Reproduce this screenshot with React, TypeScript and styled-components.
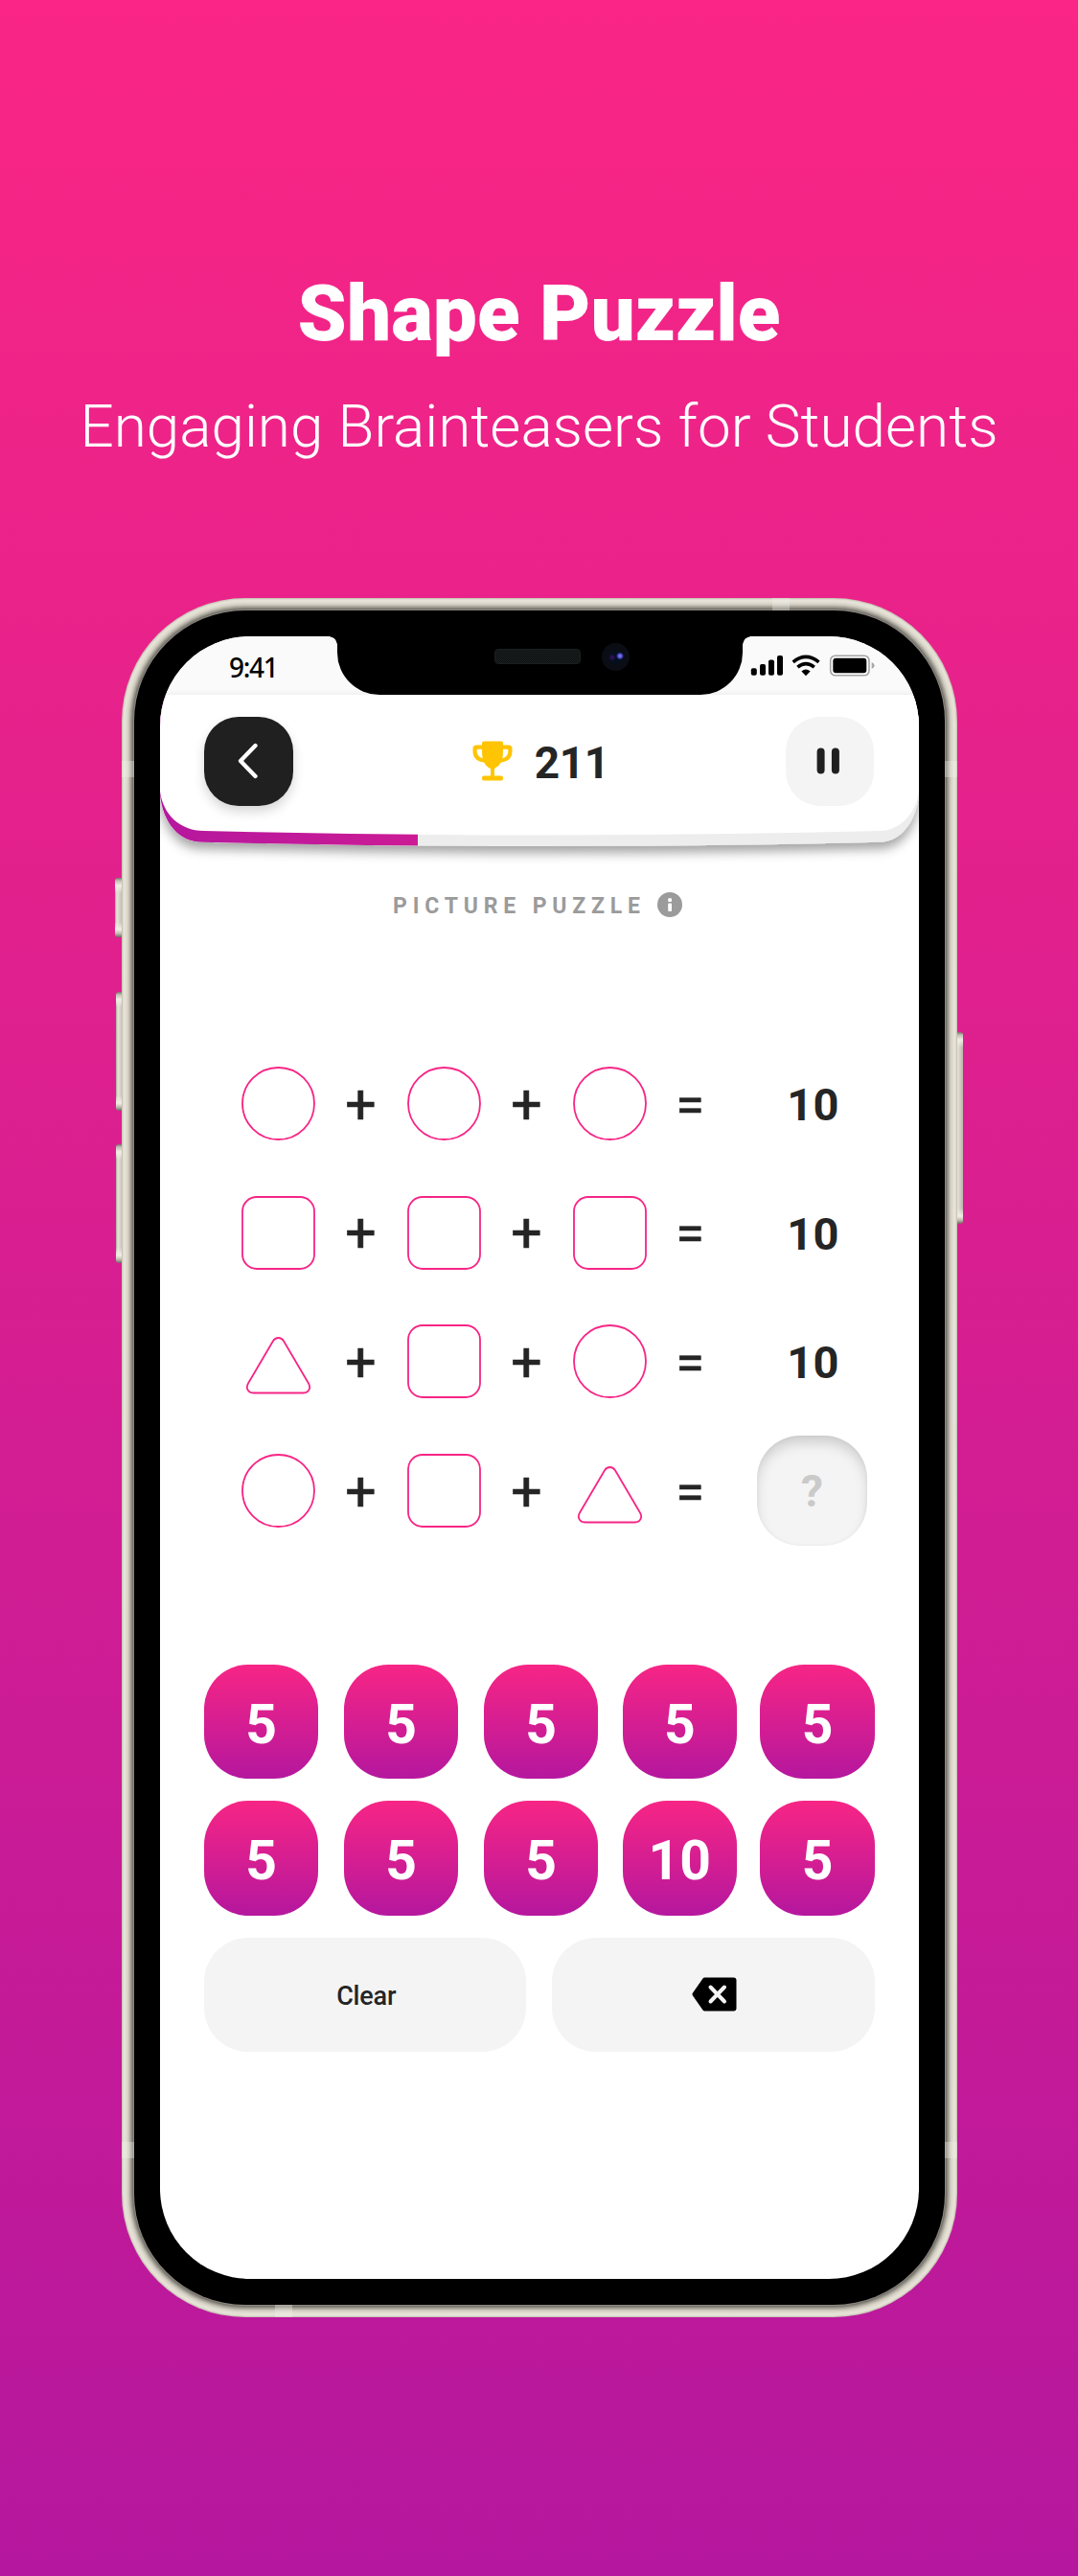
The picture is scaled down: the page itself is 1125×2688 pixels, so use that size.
import React from "react";
import styled, { createGlobalStyle } from "styled-components";

const PINK = "#f72585";
const PURPLE = "#b5179e";
const INK = "#252525";
const SOFT = "#f4f4f4";

const GlobalStyle = createGlobalStyle`
  * { box-sizing: border-box; }
  body { margin: 0; font-family: Roboto, "Liberation Sans", sans-serif; }
  button { font-family: inherit; border: 0; padding: 0; cursor: pointer; }
`;

const Page = styled.main`
  width: 1125px;
  height: 2688px;
  overflow: hidden;
  display: flex;
  flex-direction: column;
  background: linear-gradient(180deg, #fa2586 0%, ${PINK} 4%, ${PURPLE} 100%);
`;

const Headline = styled.header`
  height: 624px;
  padding-top: 278px;
  display: flex;
  flex-direction: column;
  align-items: center;
  color: #fff;
`;

const Title = styled.h1`
  margin: 0;
  font-size: 82px;
  line-height: 98px;
  font-weight: 900;
  white-space: nowrap;
`;

const Subtitle = styled.p`
  margin: 32px 0 0;
  font-size: 62px;
  line-height: 74px;
  font-weight: 300;
  white-space: nowrap;
`;

const Phone = styled.div`
  position: relative;
  width: 872px;
  height: 1794px;
  margin-left: 127px;
  padding: 13px;
`;

const SideButton = styled.span<{ $side: "left" | "right"; $top: number; $height: number; $width: number }>`
  position: absolute;
  ${(p) => p.$side}: ${(p) => -p.$width}px;
  top: ${(p) => p.$top}px;
  width: ${(p) => p.$width + 2}px;
  height: ${(p) => p.$height}px;
  border-radius: ${(p) => (p.$side === "left" ? "3px 0 0 3px" : "0 3px 3px 0")};
  background:
    linear-gradient(180deg, #77746b 0, #c2beb2 3px, #f1eee5 8px, transparent 16px, transparent calc(100% - 16px), #f1eee5 calc(100% - 8px), #c2beb2 calc(100% - 4px), #6d6a62 100%),
    linear-gradient(90deg, #aaa79d 0, #e8e5db 2px, #d2cec3 5px, #b8b4a9 100%);
`;

const Body = styled.div`
  position: relative;
  width: 846px;
  height: 1768px;
  padding: 27px;
  border-radius: 116px;
  background: #000;
  box-shadow:
    0 0 0 1px #8b8881,
    0 0 0 2px #75726b,
    0 0 0 3px #8b887f,
    0 0 0 4px #a09c92,
    0 0 0 5px #b3afa4,
    0 0 0 6px #c6c2b7,
    0 0 0 7px #d3cfc3,
    0 0 0 8px #dcd8cc,
    0 0 0 9px #e0dcd0,
    0 0 0 11px #e6e2d7,
    0 0 0 12px #dfdbcf,
    0 0 0 13px #c9c4b6;
`;

const Band = styled.span<{ $x: number; $y: number; $vertical?: boolean }>`
  position: absolute;
  left: ${(p) => p.$x}px;
  top: ${(p) => p.$y}px;
  width: ${(p) => (p.$vertical ? 18 : 13)}px;
  height: ${(p) => (p.$vertical ? 13 : 17)}px;
  background: rgba(240, 240, 235, 0.35);
`;

const Screen = styled.div`
  width: 792px;
  height: 1714px;
  border-radius: 94px;
  overflow: hidden;
  background: #fff;
  display: flex;
  flex-direction: column;
`;

const StatusBar = styled.div`
  height: 61px;
  display: grid;
  grid-template-columns: 185px 423px 184px;
  background: #fafafa;
`;

const Clock = styled.span`
  padding: 13px 0 0 72px;
  font-family: "Noto Sans", sans-serif;
  font-size: 28px;
  line-height: 38px;
  font-weight: 500;
  letter-spacing: -1.3px;
  color: #000;
`;

const Notch = styled.div`
  position: relative;
  display: flex;
  align-items: flex-start;
  background: #000;
  border-radius: 0 0 44px 44px;
  &::before,
  &::after {
    content: "";
    position: absolute;
    top: 0;
    width: 9px;
    height: 9px;
  }
  &::before {
    left: -9px;
    background: radial-gradient(circle at 0 100%, transparent 8.5px, #000 9px);
  }
  &::after {
    right: -9px;
    background: radial-gradient(circle at 100% 100%, transparent 8.5px, #000 9px);
  }
`;

const Speaker = styled.span`
  width: 90px;
  height: 16px;
  margin: 13px 0 0 164px;
  border-radius: 4px;
  border: 1px solid #1c1f1f;
  background: repeating-conic-gradient(#1c2020 0 25%, #0e1010 0 50%) 0 0 / 2px 2px;
`;

const Camera = styled.span`
  width: 29px;
  height: 29px;
  margin: 7px 0 0 22px;
  border-radius: 50%;
  background:
    radial-gradient(circle at 19px 13.5px, #8a86ff 0, #5450d8 2px, transparent 4px),
    radial-gradient(circle at 11px 15px, #3a0f66 0, transparent 4px),
    radial-gradient(circle at 15px 15px, #020d1e 0, #03101f 6px, #0b0d15 8px, #0b0d15 100%);
`;

const StatusIcons = styled.div`
  padding: 19px 0 0 8px;
`;

const TopBar = styled.header`
  position: relative;
  height: 158px;
  padding: 23px 46.5px 0 46px;
  display: flex;
  justify-content: space-between;
`;

const TopBarShape = styled.svg`
  position: absolute;
  left: 0;
  top: 0;
  overflow: visible;
`;

const SquareButton = styled.button<{ $dark?: boolean }>`
  position: relative;
  width: 92.5px;
  height: 92.5px;
  border-radius: 36px;
  display: grid;
  place-items: center;
  background: ${(p) => (p.$dark ? "#202020" : SOFT)};
  box-shadow: ${(p) => (p.$dark ? "0 6px 12px rgba(0,0,0,.16)" : "none")};
`;

const Score = styled.div`
  position: relative;
  height: 92px;
  margin-left: 3px;
  display: flex;
  align-items: center;
  gap: 23px;
  font-size: 46px;
  line-height: 56px;
  font-weight: 700;
  letter-spacing: -0.4px;
  color: ${INK};
  span { padding-top: 3px; }
`;

const Caption = styled.div`
  height: 148px;
  padding: 45px 0 0 243px;
  display: flex;
  align-items: flex-start;
  font-size: 23px;
  line-height: 35px;
  font-weight: 700;
  letter-spacing: 5.82px;
  color: #9b9b9b;
  svg { margin: 3px 0 0 12px; }
`;

const Equations = styled.section`
  padding: 53.5px 0 0 84.5px;
`;

const Equation = styled.div`
  height: 134.6px;
  display: grid;
  grid-template-columns: 77px 96px 77px 96px 77px 92px 23px 116px;
  align-items: center;
  justify-items: center;
`;

const Operator = styled.span<{ $equals?: boolean }>`
  padding-top: ${(p) => (p.$equals ? 4 : 2)}px;
  padding-right: ${(p) => (p.$equals ? 1 : 0)}px;
  font-size: ${(p) => (p.$equals ? 54 : 57)}px;
  line-height: 70px;
  font-weight: 400;
  -webkit-text-stroke: 0.6px ${INK};
  color: ${INK};
`;

const Total = styled.span`
  grid-column: 8;
  padding: 3px 0 0 2px;
  font-size: 47px;
  line-height: 56px;
  font-weight: 700;
  letter-spacing: 0.2px;
  color: ${INK};
`;

const Answer = styled.span`
  grid-column: 8;
  width: 115.5px;
  height: 115px;
  border-radius: 45px;
  display: grid;
  place-items: center;
  background: ${SOFT};
  box-shadow: inset 0 9px 14px -2px rgba(0, 0, 0, 0.17), inset 0 0 4px rgba(0, 0, 0, 0.04);
  font-size: 46px;
  font-weight: 700;
  color: #cacaca;
`;

const Keypad = styled.section`
  padding: 114px 46px 0;
`;

const Keys = styled.div`
  display: grid;
  grid-template-columns: 146px 146px 144.6px 143.8px 119.4px;
  row-gap: 22.6px;
`;

const Key = styled.button`
  width: 119.4px;
  height: 119.6px;
  border-radius: 46px;
  background: linear-gradient(180deg, ${PINK}, ${PURPLE});
  color: #fff;
  font-size: 57px;
  line-height: 70px;
  padding-top: 6px;
  font-weight: 700;
`;

const Actions = styled.div`
  margin-top: 23px;
  display: grid;
  grid-template-columns: 336.4px 336.4px;
  column-gap: 27px;
`;

const Action = styled.button`
  height: 119.4px;
  border-radius: 46px;
  display: grid;
  place-items: center;
  background: ${SOFT};
  color: ${INK};
  font-size: 27px;
  font-weight: 500;
  span { padding: 4px 0 0 2px; letter-spacing: -0.2px; }
  svg { margin: 0 0 1px 2px; }
`;

type ShapeName = "circle" | "square" | "triangle";

function Shape({ name }: { name: ShapeName }) {
  return (
    <svg width="77" height="77" viewBox="0 0 77 77" fill="none" stroke={PINK} strokeWidth="1.8">
      {name === "circle" && <circle cx="38.5" cy="38.5" r="37.5" />}
      {name === "square" && <rect x="1" y="1" width="75" height="75" rx="15" />}
      {name === "triangle" && (
        <path d="M33 17.2Q35 14 38.500 14T44 17.200L70 61.500Q72.500 66 69.800 69.200Q68 71.500 64 71.500H13Q9 71.500 7.200 69.200Q4.500 66 7 61.500Z" />
      )}
    </svg>
  );
}

function StatusGlyphs() {
  return (
    <svg width="134" height="24" viewBox="0 0 134 24">
      <g fill="#000">
        <rect x="0.8" y="14.3" width="6" height="7.5" rx="2" />
        <rect x="10" y="10" width="6" height="11.8" rx="2" />
        <rect x="19" y="5.6" width="6" height="16.2" rx="2" />
        <rect x="28" y="1" width="6" height="20.8" rx="2" />
      </g>
      <g fill="none" stroke="#000" strokeWidth="3.6">
        <path d="M44.7 7.8Q58 -3 71.5 7.8" />
        <path d="M49.4 13.2Q58 6 66.8 13.2" />
      </g>
      <path d="M53.4 17.6Q58 13.6 62.6 17.6L58 22.2Z" fill="#000" />
      <rect x="83.7" y="1.2" width="40.3" height="20.6" rx="5" fill="#fff" stroke="#a3a3a3" strokeWidth="1.6" />
      <rect x="86.3" y="3.8" width="35" height="15.4" rx="3" fill="#000" />
      <path d="M126.7 8V15Q129.6 13.6 129.6 11.5T126.7 8Z" fill="#a8a8a8" />
    </svg>
  );
}

function TopBarBackground() {
  const lower = "M0 104C3 134 20 153.7 44 153.7Q396 162.500 751 153.700C772 153.700 789 134 792 104V0H0Z";
  return (
    <TopBarShape width="792" height="158" viewBox="0 0 792 158">
      <defs>
        <linearGradient id="progress" x1="0" x2="792" y1="0" y2="0" gradientUnits="userSpaceOnUse">
          <stop offset="0" stopColor={PURPLE} />
          <stop offset="1" stopColor={PINK} />
        </linearGradient>
        <clipPath id="lower"><path d={lower} /></clipPath>
        <filter id="shade" x="-5%" y="-5%" width="110%" height="140%">
          <feDropShadow dx="0" dy="7" stdDeviation="6" floodColor="#000" floodOpacity="0.36" />
        </filter>
      </defs>
      <path d={lower} fill="#ededed" filter="url(#shade)" />
      <rect width="269" height="160" fill="url(#progress)" clipPath="url(#lower)" />
      <path d="M0 0V101C3 124 20 142 46 142Q396 151 751 142C772 142 789 124 792 101V0Z" fill="#fff" />
    </TopBarShape>
  );
}

const rows: { shapes: ShapeName[]; total?: number }[] = [
  { shapes: ["circle", "circle", "circle"], total: 10 },
  { shapes: ["square", "square", "square"], total: 10 },
  { shapes: ["triangle", "square", "circle"], total: 10 },
  { shapes: ["circle", "square", "triangle"] },
];

const keys = [5, 5, 5, 5, 5, 5, 5, 5, 10, 5];

export default function App() {
  return (
    <Page>
      <GlobalStyle />
      <Headline>
        <Title>Shape Puzzle</Title>
        <Subtitle>Engaging Brainteasers for Students</Subtitle>
      </Headline>
      <Phone>
        <SideButton $side="left" $top={292} $height={62} $width={7} />
        <SideButton $side="left" $top={411} $height={124} $width={6} />
        <SideButton $side="left" $top={570} $height={124} $width={6} />
        <SideButton $side="right" $top={453} $height={200} $width={6} />
        <Body>
          <Screen>
            <StatusBar>
              <Clock>9:41</Clock>
              <Notch>
                <Speaker />
                <Camera />
              </Notch>
              <StatusIcons>
                <StatusGlyphs />
              </StatusIcons>
            </StatusBar>
            <TopBar>
              <TopBarBackground />
              <SquareButton $dark aria-label="Back">
                <svg width="40" height="40" viewBox="0 0 40 40" fill="none" stroke="#fff" strokeWidth="4.3" strokeLinecap="round" strokeLinejoin="round">
                  <path d="M27.500 4L12 20L27.500 36" />
                </svg>
              </SquareButton>
              <Score>
                <svg width="42" height="42" viewBox="0 0 42 42" fill="#ffc403">
                  <path d="M12 0.5H30Q32 .5 32 2.5V4.5H38Q41.5 4.5 41.5 8V11Q41.5 21 30 22.5Q27.5 27 23 29V36.5H30Q32 36.5 32 38.5V39.5Q32 41.5 30 41.5H12Q10 41.5 10 39.5V38.5Q10 36.5 12 36.5H19V29Q14.500 27 12 22.500Q.5 21 .5 11V8Q.5 4.500 4 4.500H10V2.500Q10 .5 12 .5ZM10 8.800H6Q4.600 8.800 4.600 10.200Q4.600 16.500 10.600 18.300Q10 15 10 8.800ZM32 8.800Q32 15 31.400 18.300Q37.400 16.500 37.400 10.200Q37.400 8.800 36 8.800Z" fillRule="evenodd" />
                </svg>
                <span>211</span>
              </Score>
              <SquareButton aria-label="Pause">
                <svg width="32" height="32" viewBox="0 0 32 32" fill="#202020">
                  <rect x="2.600" y="2.500" width="8" height="27" rx="4" />
                  <rect x="17.900" y="2.500" width="8" height="27" rx="4" />
                </svg>
              </SquareButton>
            </TopBar>
            <Caption>
              <span>PICTURE PUZZLE</span>
              <svg width="26" height="26" viewBox="0 0 26 26">
                <circle cx="13" cy="13" r="13" fill="#9b9b9b" />
                <rect x="11.200" y="6.300" width="3.800" height="3.800" rx="1" fill="#fff" />
                <rect x="11.200" y="11.500" width="3.800" height="8.500" rx="1" fill="#fff" />
              </svg>
            </Caption>
            <Equations>
              {rows.map((row, i) => (
                <Equation key={i}>
                  <Shape name={row.shapes[0]} />
                  <Operator>+</Operator>
                  <Shape name={row.shapes[1]} />
                  <Operator>+</Operator>
                  <Shape name={row.shapes[2]} />
                  <Operator $equals>=</Operator>
                  {row.total ? <Total>{row.total}</Total> : <Answer>?</Answer>}
                </Equation>
              ))}
            </Equations>
            <Keypad>
              <Keys>
                {keys.map((value, i) => (
                  <Key key={i}>{value}</Key>
                ))}
              </Keys>
              <Actions>
                <Action><span>Clear</span></Action>
                <Action aria-label="Delete">
                  <svg width="47" height="36" viewBox="0 0 47 36">
                    <path d="M11.500 1.500Q12.300.5 13.500.5H43.500Q46.500.5 46.500 3.500V32.500Q46.500 35.500 43.500 35.500H13.500Q12.300 35.500 11.500 34.500L1 19.500Q0 18 1 16.500Z" fill="#000" />
                    <path d="M19.500 10.500L34 25.500M34 10.500L19.500 25.500" stroke="#f4f4f4" strokeWidth="4" strokeLinecap="round" />
                  </svg>
                </Action>
              </Actions>
            </Keypad>
          </Screen>
        </Body>
        <Band $x={0} $y={170} />
        <Band $x={859} $y={170} />
        <Band $x={0} $y={1611} />
        <Band $x={859} $y={1611} />
        <Band $x={679} $y={0} $vertical />
        <Band $x={160} $y={1781} $vertical />
      </Phone>
    </Page>
  );
}
